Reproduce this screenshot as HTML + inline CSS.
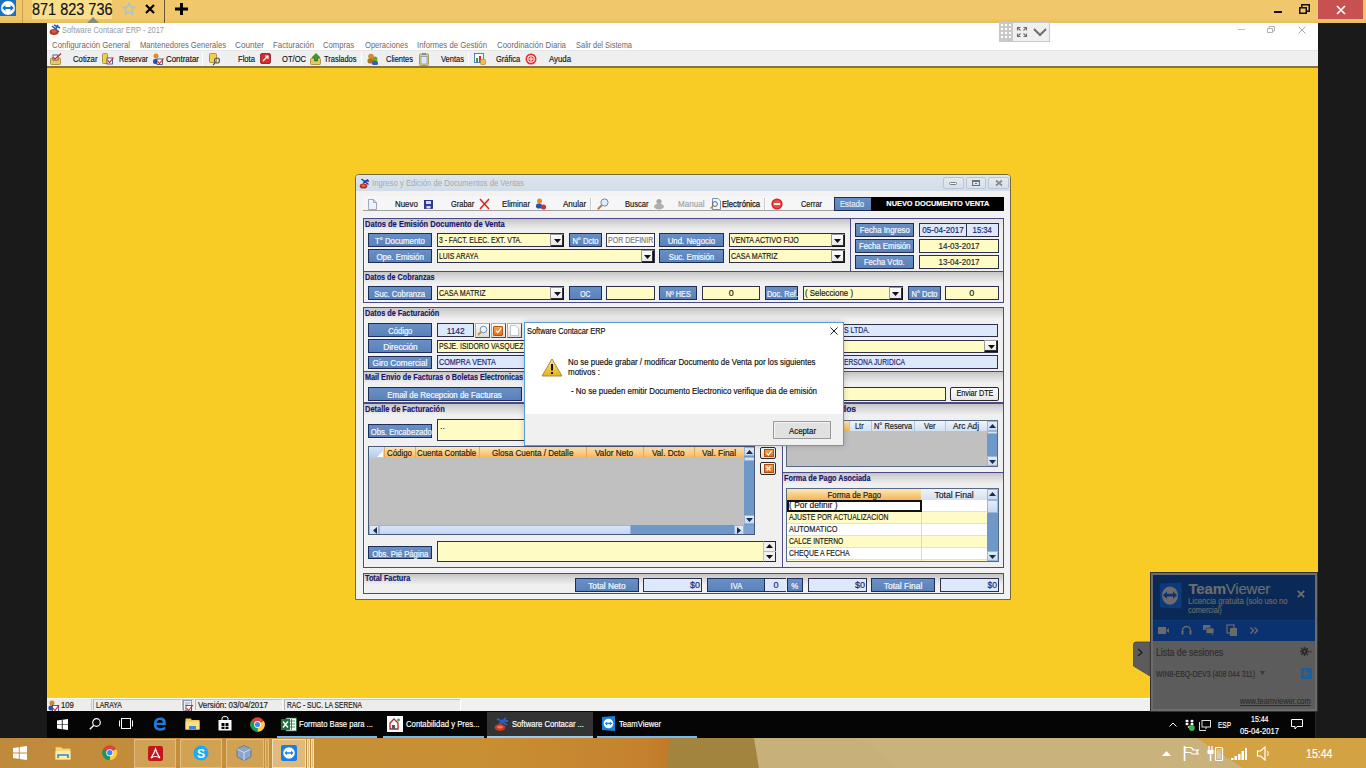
<!DOCTYPE html>
<html><head><meta charset="utf-8">
<style>
*{margin:0;padding:0;box-sizing:border-box}
html,body{width:1366px;height:768px;overflow:hidden;background:#1a1a1a;font-family:"Liberation Sans",sans-serif;}
.a{position:absolute}
.t{position:absolute;white-space:nowrap;line-height:1}
svg{position:absolute;overflow:visible}
.mn{position:absolute;white-space:nowrap;line-height:1;font-size:8.6px;color:#6a6a6a;top:41px}
.tbt{position:absolute;white-space:nowrap;line-height:1;font-size:8.6px;color:#111;top:55px;-webkit-text-stroke:0.15px #111}
.sep{position:absolute;width:1px;background:#c4c4c4;border-right:1px solid #fff}
/* child */
.bb{position:absolute;background:linear-gradient(#6a8fc4,#5a80b6);border:1px solid #1f3260;color:#e8eef8;font-size:8.2px;text-align:center;white-space:nowrap;overflow:hidden}
.yi{position:absolute;background:#fffbc2;border:1px solid #34344a;font-size:8.2px;color:#111;white-space:nowrap;overflow:hidden}
.li{position:absolute;background:#dde8fb;border:1px solid #34344a;font-size:8.2px;color:#1d2a80;white-space:nowrap;overflow:hidden}
.dd{position:absolute;width:14px;background:linear-gradient(#fdfdfd,#e4e4e4);border:1px solid #222;border-top-color:#888;border-left-color:#888}
.dd:after{content:"";position:absolute;left:3px;top:5px;border-left:3.5px solid transparent;border-right:3.5px solid transparent;border-top:4px solid #111}
.gb{position:absolute;border:1px solid #4e4d85;background:#f0f0f0}
.gh{position:absolute;left:0;top:0;right:0;height:10px;background:linear-gradient(#c8c8c8,#f0f0f0)}
.ght{position:absolute;white-space:nowrap;line-height:1;font-size:8.6px;font-weight:bold;color:#23237a}
.ct{position:absolute;white-space:nowrap;line-height:1;font-size:8.4px;color:#111}
.is{display:inline-block}
.t,.is{-webkit-text-stroke:0.18px currentColor}
</style></head>
<body>
<!-- ============ TV TOP BAR ============ -->
<div class="a" style="left:0;top:0;width:1366px;height:23px;background:linear-gradient(#f0c86b 0,#f0c86b 80%,#e6bd60 100%)"></div>
<div class="a" style="left:0;top:0;width:16px;height:16px;background:#1d6fc4"></div>
<div class="a" style="left:1px;top:1px;width:14px;height:14px;border-radius:50%;background:#fff"></div>
<svg style="left:2px;top:4px" width="12" height="8" viewBox="0 0 12 8"><path d="M0 4 L3.5 1 V3 H8.5 V1 L12 4 L8.5 7 V5 H3.5 V7 Z" fill="#1d6fc4"></path></svg>
<div class="a" style="left:22px;top:0;width:1px;height:23px;background:#c9a04e"></div>
<div class="a" style="left:32px;top:0;width:80px;height:19px;background:#f9df8c"></div>
<div class="t" style="left: 32px; top: 0.8px; font-size: 17px; color: rgb(17, 17, 17); transform-origin: left center; transform: scaleX(0.8514);">871 823 736</div>
<svg style="left:87px;top:16px" width="12" height="7"><path d="M0 7 L6 1 L12 7Z" fill="#8a8a80"></path></svg>
<svg style="left:121px;top:1px" width="16" height="15" viewBox="0 0 16 15"><path d="M8 0.5 L10.2 5.3 L15.5 5.8 L11.5 9.3 L12.7 14.5 L8 11.8 L3.3 14.5 L4.5 9.3 L0.5 5.8 L5.8 5.3 Z" fill="#aac4cf"></path><path d="M8 4 L9.1 6.6 L12 6.9 L9.8 8.8 L10.5 11.6 L8 10.1 L5.5 11.6 L6.2 8.8 L4 6.9 L6.9 6.6Z" fill="#f0c86b"></path></svg>
<svg style="left:145px;top:4px" width="10" height="10"><path d="M1 1 L9 9 M9 1 L1 9" stroke="#000" stroke-width="2.2"></path></svg>
<div class="a" style="left:164px;top:0;width:1px;height:23px;background:#6a5a30"></div>
<svg style="left:175px;top:3px" width="13" height="12"><path d="M6.5 0 V12 M0 6 H13" stroke="#000" stroke-width="3"></path></svg>
<div class="a" style="left:1274px;top:11px;width:8px;height:2px;background:#111"></div>
<svg style="left:1299px;top:4px" width="11" height="10"><path d="M0.75 3.75 H7.25 V9.25 H0.75 Z M2.75 3.5 V0.75 H10.25 V7.25 H7.5" fill="none" stroke="#111" stroke-width="1.5"></path></svg>
<div class="a" style="left:1318px;top:0;width:45px;height:19px;background:#c75050"></div>
<svg style="left:1336px;top:5px" width="10" height="10"><path d="M1 1 L9 9 M9 1 L1 9" stroke="#fff" stroke-width="1.6"></path></svg>

<!-- ============ APP WINDOW ============ -->
<div class="a" style="left:47px;top:23px;width:1271px;height:28px;background:#fff"></div>
<div class="a" style="left:47px;top:50px;width:1271px;height:17px;background:#efefef;border-top:1px solid #e6e6e6"></div>
<div class="a" style="left:47px;top:66.4px;width:1271px;height:2px;background:#857443"></div>
<!-- app icon -->
<svg style="left:49px;top:24px" width="12" height="12" viewBox="0 0 12 12"><path d="M5 1 L11 4 M9 1 L6 6 M3 2 L10 8" stroke="#2a5bb8" stroke-width="1.6"></path><ellipse cx="5" cy="8" rx="4.5" ry="3" fill="#b0402a"></ellipse><ellipse cx="5" cy="7.5" rx="2.5" ry="1.3" fill="#e06040"></ellipse></svg>
<div class="t" style="left: 62px; top: 26px; font-size: 8.8px; color: rgb(154, 154, 154); -webkit-text-stroke: 0px; transform-origin: left center; transform: scaleX(0.8456);">Software Contacar ERP - 2017</div>
<div class="mn" style="left: 52px; transform-origin: left center; transform: scaleX(0.907);">Configuración General</div>
<div class="mn" style="left: 140px; transform-origin: left center; transform: scaleX(0.8867);">Mantenedores Generales</div>
<div class="mn" style="left: 235px; transform-origin: left center; transform: scaleX(0.9484);">Counter</div>
<div class="mn" style="left: 273px; transform-origin: left center; transform: scaleX(0.913);">Facturación</div>
<div class="mn" style="left: 323px; transform-origin: left center; transform: scaleX(0.8889);">Compras</div>
<div class="mn" style="left: 364.5px; transform-origin: left center; transform: scaleX(0.8823);">Operaciones</div>
<div class="mn" style="left: 417px; transform-origin: left center; transform: scaleX(0.9045);">Informes de Gestión</div>
<div class="mn" style="left: 497px; transform-origin: left center; transform: scaleX(0.9141);">Coordinación Diaria</div>
<div class="mn" style="left: 575.5px; transform-origin: left center; transform: scaleX(0.8684);">Salir del Sistema</div>
<!-- TV widget -->
<div class="a" style="left:999px;top:22px;width:51px;height:20px;background:#f0f0f0;border:1px solid #c8c8c8"></div>
<div class="a" style="left:999px;top:22px;width:14px;height:20px;background:#c9c9c9"></div>
<svg style="left:1001px;top:24px" width="10" height="16"><g fill="#fff"><rect x="0" y="0" width="2" height="2"></rect><rect x="4" y="0" width="2" height="2"></rect><rect x="8" y="0" width="2" height="2"></rect><rect x="0" y="4" width="2" height="2"></rect><rect x="4" y="4" width="2" height="2"></rect><rect x="8" y="4" width="2" height="2"></rect><rect x="0" y="8" width="2" height="2"></rect><rect x="4" y="8" width="2" height="2"></rect><rect x="8" y="8" width="2" height="2"></rect><rect x="0" y="12" width="2" height="2"></rect><rect x="4" y="12" width="2" height="2"></rect><rect x="8" y="12" width="2" height="2"></rect></g></svg>
<svg style="left:1017px;top:27px" width="10" height="10"><path d="M0.5 3.5 V0.5 H3.5 M0.5 0.5 L3.5 3.5 M6.5 0.5 H9.5 V3.5 M9.5 0.5 L6.5 3.5 M0.5 6.5 V9.5 H3.5 M0.5 9.5 L3.5 6.5 M9.5 6.5 V9.5 H6.5 M9.5 9.5 L6.5 6.5" stroke="#6e6e6e" stroke-width="1.1" fill="none"></path></svg>
<svg style="left:1033px;top:28px" width="14" height="8"><path d="M1 1 L7 7 L13 1" stroke="#6e6e6e" stroke-width="2" fill="none"></path></svg>
<div class="a" style="left:1238px;top:29px;width:7px;height:1px;background:#c0c0c0"></div>
<svg style="left:1267px;top:26px" width="8" height="7"><path d="M0.5 2.5 H5.5 V6.5 H0.5 Z M2 2.5 V0.5 H7.5 V5 H5.5" fill="none" stroke="#b0b0b0" stroke-width="1"></path></svg>
<svg style="left:1298px;top:26px" width="8" height="8"><path d="M0.5 0.5 L7.5 7.5 M7.5 0.5 L0.5 7.5" stroke="#a8a8a8" stroke-width="1"></path></svg>

<!-- toolbar -->
<svg style="left:50px;top:53px" width="12" height="12" viewBox="0 0 12 12"><rect x="0.5" y="5" width="10" height="6.5" rx="1" fill="#e8c860" stroke="#a08030" stroke-width="0.8"></rect><rect x="3" y="2" width="5" height="5" fill="#fff" stroke="#2a3a80" stroke-width="0.8"></rect><path d="M3.5 4 L5 6 L11 0.5" stroke="#d02020" stroke-width="1.2" fill="none"></path></svg>
<div class="tbt" style="left: 72.5px; transform-origin: left center; transform: scaleX(0.8996);">Cotizar</div>
<svg style="left:102px;top:53px" width="12" height="12" viewBox="0 0 12 12"><rect x="0.5" y="0.5" width="5" height="10" rx="1" fill="#f0d050" stroke="#a08030" stroke-width="0.8"></rect><rect x="5" y="5" width="5.5" height="6" fill="#fff" stroke="#2a3a80" stroke-width="0.8"></rect><path d="M5.5 7 L7.5 9.5 L11.5 4.5" stroke="#d02020" stroke-width="1.1" fill="none"></path></svg>
<div class="tbt" style="left: 118.6px; transform-origin: left center; transform: scaleX(0.8315);">Reservar</div>
<svg style="left:152px;top:53px" width="12" height="12" viewBox="0 0 12 12"><circle cx="4" cy="3" r="2.5" fill="#e08a2a"></circle><rect x="1" y="6" width="5" height="5" rx="2" fill="#2a50b0"></rect><rect x="5" y="6" width="5.5" height="5.5" fill="#fff" stroke="#2a3a80" stroke-width="0.8"></rect><path d="M5.5 8 L7.5 10.5 L11.5 5.5" stroke="#d02020" stroke-width="1.1" fill="none"></path></svg>
<div class="tbt" style="left: 165.6px; transform-origin: left center; transform: scaleX(0.9211);">Contratar</div>
<div class="sep" style="left:202px;top:53px;height:13px"></div>
<svg style="left:209px;top:53px" width="12" height="12" viewBox="0 0 12 12"><rect x="0.5" y="0.5" width="7" height="9" rx="1" fill="#f0d050" stroke="#a08030" stroke-width="0.8"></rect><circle cx="8" cy="7.5" r="2.5" fill="none" stroke="#555" stroke-width="1.2"></circle><path d="M6 10 L4 12" stroke="#555" stroke-width="1.2"></path></svg>
<div class="tbt" style="left: 237.7px; transform-origin: left center; transform: scaleX(0.8896);">Flota</div>
<svg style="left:260px;top:53px" width="11" height="11" viewBox="0 0 11 11"><rect x="0.5" y="0.5" width="10" height="10" rx="1.5" fill="#d03030" stroke="#801818" stroke-width="0.8"></rect><path d="M3 8 L8 3 M5 3 H8 V6" stroke="#fff" stroke-width="1.2" fill="none"></path></svg>
<div class="tbt" style="left: 281.6px; transform-origin: left center; transform: scaleX(0.8817);">OT/OC</div>
<svg style="left:310px;top:53px" width="12" height="12" viewBox="0 0 12 12"><rect x="0.5" y="5.5" width="10" height="6" rx="1" fill="#e8c860" stroke="#a08030" stroke-width="0.8"></rect><path d="M6 0.5 L10 4.5 H7.5 V8 H4.5 V4.5 H2 Z" fill="#30a030" stroke="#106010" stroke-width="0.6"></path></svg>
<div class="tbt" style="left: 324.4px; transform-origin: left center; transform: scaleX(0.8685);">Traslados</div>
<div class="sep" style="left:361px;top:53px;height:13px"></div>
<svg style="left:367px;top:53px" width="12" height="12" viewBox="0 0 12 12"><circle cx="4" cy="3.5" r="2.8" fill="#d88a20"></circle><rect x="0.5" y="5.5" width="6" height="5" rx="2" fill="#b07020"></rect><circle cx="8" cy="6" r="2.5" fill="#70a030"></circle><rect x="5" y="8" width="6" height="4" rx="1.5" fill="#3060c0"></rect></svg>
<div class="tbt" style="left: 385.6px; transform-origin: left center; transform: scaleX(0.8692);">Clientes</div>
<svg style="left:419px;top:53px" width="10" height="13" viewBox="0 0 10 13"><rect x="0.5" y="1" width="9" height="11.5" rx="1" fill="#e8d070" stroke="#a08840" stroke-width="0.8"></rect><rect x="2" y="3.5" width="6" height="7.5" fill="#dfe8f8" stroke="#6080c0" stroke-width="0.6"></rect><rect x="3" y="0" width="4" height="2" fill="#8090a0"></rect></svg>
<div class="tbt" style="left: 441.2px; transform-origin: left center; transform: scaleX(0.8751);">Ventas</div>
<div class="sep" style="left:468px;top:53px;height:13px"></div>
<svg style="left:474px;top:53px" width="12" height="12" viewBox="0 0 12 12"><rect x="0.5" y="0.5" width="9" height="9" fill="#fff" stroke="#3060b0" stroke-width="0.8"></rect><rect x="2" y="5" width="2" height="4" fill="#30a030"></rect><rect x="5" y="3" width="2" height="6" fill="#d03030"></rect><rect x="6.5" y="6.5" width="5" height="5" rx="1" fill="#f0c040" stroke="#a08030" stroke-width="0.6"></rect></svg>
<div class="tbt" style="left: 495.7px; transform-origin: left center; transform: scaleX(0.8772);">Gráfica</div>
<svg style="left:525px;top:53px" width="12" height="12" viewBox="0 0 12 12"><circle cx="6" cy="6" r="5.5" fill="#e03030"></circle><circle cx="6" cy="6" r="3.8" fill="#fff"></circle><circle cx="6" cy="6" r="2.8" fill="#e03030"></circle><path d="M6 3.5 V8.5 M3.5 6 H8.5" stroke="#fff" stroke-width="1"></path></svg>
<div class="tbt" style="left: 549px; transform-origin: left center; transform: scaleX(0.9084);">Ayuda</div>

<!-- ============ MDI ============ -->
<div class="a" style="left:47px;top:68.2px;width:1271px;height:629.8px;background:#f9cb25"></div>

<!-- ============ CHILD WINDOW ============ -->
<div class="a" style="left:355px;top:174px;width:656px;height:426px;background:#f0f0f0;border:1px solid #76683a;border-radius:4px 4px 0 0;"></div>
<div class="a" style="left:356px;top:175px;width:654px;height:16px;background:linear-gradient(#dde6ef,#d3dde8);border-radius:3px 3px 0 0;"></div>
<div class="a" style="left:356px;top:191px;width:654px;height:408px;background:#f2f2f2;"></div>
<svg style="left:359px;top:178px" width="11" height="11" viewBox="0 0 11 11"><path d="M2.5 1 L9.5 6.5 M9 1.5 L4 5.5 M5 3 L10 3" stroke="#1c3a9a" stroke-width="1.5"></path><ellipse cx="4.5" cy="8" rx="3.8" ry="2.6" fill="#b83020"></ellipse><ellipse cx="4.5" cy="7.8" rx="2" ry="1.2" fill="#f06040"></ellipse></svg>
<div class="t" style="left: 372.4px; top: 179.02px; font-size: 8.6px; color: rgb(168, 168, 168); -webkit-text-stroke: 0px; transform-origin: left center; transform: scaleX(0.8987);">Ingreso y Edición de Documentos de Ventas</div>
<div class="a" style="left:943px;top:177.3px;width:20.5px;height:11.5px;background:linear-gradient(#e3eaf2,#d6e0ea);border:1px solid #bcc6d2;border-radius:2px;"></div>
<div class="a" style="left:965.8px;top:177.3px;width:19.9px;height:11.5px;background:linear-gradient(#e3eaf2,#d6e0ea);border:1px solid #bcc6d2;border-radius:2px;"></div>
<div class="a" style="left:988px;top:177.3px;width:20.7px;height:11.5px;background:linear-gradient(#e3eaf2,#d6e0ea);border:1px solid #bcc6d2;border-radius:2px;"></div>
<div class="a" style="left:949px;top:181.5px;width:8px;height:3px;border:1px solid #7a7a7a;border-radius:1.5px;background:#fafafa;"></div>
<div class="a" style="left:972px;top:180px;width:7.5px;height:6px;border:1px solid #707070;border-top-width:2px;"></div>
<div class="a" style="left:974.5px;top:182.5px;width:2px;height:1.5px;background:#707070;"></div>
<svg style="left:994.5px;top:180px" width="8" height="6"><path d="M1 0.5 L7 5.5 M7 0.5 L1 5.5" stroke="#8a8a8a" stroke-width="1.7"></path></svg>
<div class="a" style="left:363px;top:196px;width:471px;height:15px;background:#f6f6f6;border-bottom:1px solid #a0a0a0;"></div>
<svg style="left:368px;top:199px" width="9" height="11" viewBox="0 0 9 11"><path d="M0.5 0.5 H5.5 L8.5 3.5 V10.5 H0.5 Z" fill="#eef3fb" stroke="#8a96a8" stroke-width="0.8"></path><path d="M5.5 0.5 V3.5 H8.5" fill="none" stroke="#8a96a8" stroke-width="0.8"></path></svg>
<div class="t" style="left: 394.7px; top: 201.26px; font-size: 8.2px; color: rgb(21, 21, 21); transform-origin: left center; transform: scaleX(0.9632);">Nuevo</div>
<svg style="left:424px;top:200px" width="9" height="9" viewBox="0 0 9 9"><rect x="0.5" y="0.5" width="8" height="8" fill="#2d3fb0" stroke="#1a2470" stroke-width="0.8"></rect><rect x="2" y="1" width="5" height="3" fill="#d8d8e8"></rect><rect x="2.5" y="6" width="4" height="2.5" fill="#e0e0f0"></rect></svg>
<div class="t" style="left: 451px; top: 201.26px; font-size: 8.2px; color: rgb(21, 21, 21); transform-origin: left center; transform: scaleX(0.9104);">Grabar</div>
<svg style="left:479px;top:198px" width="11" height="12"><path d="M1 1 L10 11 M10 1 L1 11" stroke="#e02020" stroke-width="1.5"></path></svg>
<div class="t" style="left: 501.8px; top: 201.26px; font-size: 8.2px; color: rgb(21, 21, 21); transform-origin: left center; transform: scaleX(0.9466);">Eliminar</div>
<svg style="left:535px;top:198px" width="12" height="12" viewBox="0 0 12 12"><circle cx="4.5" cy="3" r="2.5" fill="#e08a2a"></circle><rect x="1" y="5.5" width="6" height="5" rx="2" fill="#2a50b0"></rect><circle cx="8.5" cy="9" r="2.6" fill="#d03030"></circle></svg>
<div class="t" style="left: 563.3px; top: 201.26px; font-size: 8.2px; color: rgb(21, 21, 21); transform-origin: left center; transform: scaleX(0.9801);">Anular</div>
<div class="a" style="left:590px;top:198px;width:2px;height:12px;background:#c8c8c8;border-right:1px solid #fff;"></div>
<svg style="left:597px;top:198px" width="12" height="12" viewBox="0 0 12 12"><circle cx="7.5" cy="4.5" r="3.6" fill="#dfeefa" stroke="#6a8ab0" stroke-width="1"></circle><path d="M4.8 7.2 L0.8 11.2" stroke="#c08030" stroke-width="2"></path></svg>
<div class="t" style="left: 624.5px; top: 201.26px; font-size: 8.2px; color: rgb(21, 21, 21); transform-origin: left center; transform: scaleX(0.9221);">Buscar</div>
<svg style="left:653px;top:198px" width="12" height="12" viewBox="0 0 12 12"><circle cx="6" cy="3.5" r="2.6" fill="#a8a8a8"></circle><ellipse cx="6" cy="8.5" rx="5" ry="3" fill="#b0b0b0"></ellipse></svg>
<div class="t" style="left: 677.5px; top: 201.26px; font-size: 8.2px; color: rgb(164, 164, 164); transform-origin: left center; transform: scaleX(0.9866);">Manual</div>
<svg style="left:710px;top:198px" width="11" height="12" viewBox="0 0 11 12"><path d="M2.5 0.5 H8 L10.5 3 V11.5 H2.5 Z" fill="#f4f8fc" stroke="#5a7aa0" stroke-width="0.8"></path><circle cx="5" cy="6" r="2.4" fill="none" stroke="#4a6a98" stroke-width="1"></circle><path d="M3.2 7.8 L0.5 10.5" stroke="#c08030" stroke-width="1.4"></path></svg>
<div class="t" style="left: 722.3px; top: 201.26px; font-size: 8.2px; color: rgb(21, 21, 21); -webkit-text-stroke: 0.25px rgb(21, 21, 21); transform-origin: left center; transform: scaleX(0.9379);">Electrónica</div>
<div class="a" style="left:764px;top:198px;width:2px;height:12px;background:#c8c8c8;border-right:1px solid #fff;"></div>
<svg style="left:771px;top:198px" width="12" height="12" viewBox="0 0 12 12"><circle cx="6" cy="6" r="5.6" fill="#d82020"></circle><circle cx="6" cy="6" r="4.2" fill="#f04848"></circle><rect x="2.8" y="5" width="6.4" height="2" fill="#fff"></rect></svg>
<div class="t" style="left: 801px; top: 201.26px; font-size: 8.2px; color: rgb(21, 21, 21); transform-origin: left center; transform: scaleX(0.9051);">Cerrar</div>
<div class="a" style="left:834px;top:196.5px;width:37px;height:14.1px;background:linear-gradient(#6890c6,#5a82b9);border:1px solid #1d2d58;border-right:none;"></div>
<div class="a" style="left:834px;top:199.69px;width:37px;text-align:center;line-height:1;white-space:nowrap;font-size:8.4px;color:#e6edf7;"><span class="is" style="transform-origin: center center; transform: scaleX(0.928);">Estado</span></div>
<div class="a" style="left:871px;top:196.5px;width:133px;height:14.1px;background:#000;"></div>
<div class="a" style="left:871px;top:200.03px;width:133px;text-align:center;line-height:1;white-space:nowrap;font-size:8px;color:#fff;font-weight:bold;"><span class="is" style="transform-origin: center center; transform: scaleX(0.922);">NUEVO DOCUMENTO VENTA</span></div>
<div class="a" style="left:363px;top:218px;width:641px;height:53.5px;background:#f0f0f0;border:1px solid #4b4a86;box-shadow:inset 1px 1px 0 #fafafa;"></div>
<div class="a" style="left:364px;top:219px;width:639px;height:11px;background:linear-gradient(#c4c4c4,#d6d6d6 35%,#f0f0f0);"></div>
<div class="t" style="left: 365.3px; top: 219.7px; font-size: 8.5px; color: rgb(22, 22, 110); font-weight: bold; transform-origin: left center; transform: scaleX(0.8861);">Datos de Emisión Documento de Venta</div>
<div class="a" style="left:850px;top:218px;width:1px;height:53px;background:#4b4a86;"></div>
<div class="a" style="left:851px;top:219px;width:152px;height:11px;background:linear-gradient(#e2e2e2,#f0f0f0);"></div>
<div class="a" style="left:368px;top:233.2px;width:64px;height:14.1px;background:linear-gradient(#6890c6,#5a82b9);border:1px solid #1d2d58;"></div>
<div class="a" style="left:368px;top:237.09px;width:64px;text-align:center;line-height:1;white-space:nowrap;font-size:8.4px;color:#e9f0f9;text-shadow:0 0 0.6px rgba(255,255,255,0.5)"><span class="is" style="transform-origin: center center; transform: scaleX(0.9287);">T° Documento</span></div>
<div class="a" style="left:437.2px;top:233.2px;width:127.2px;height:14.1px;background:#fffbc4;border:1px solid #2e2e48;"></div>
<div class="t" style="left: 439.2px; top: 236.37px; font-size: 9px; color: rgb(26, 26, 26); transform-origin: left center; transform: scaleX(0.7589);">3 - FACT. ELEC. EXT. VTA.</div>
<div class="a" style="left:550.4px;top:233.7px;width:13.5px;height:13.1px;background:linear-gradient(#fefefe,#e6e6e6);border:1px solid #111;border-top-color:#9a9a9a;border-left-color:#9a9a9a;box-shadow:inset -1px -1px 0 #333;"></div>
<svg style="left:553.65px;top:238.75px" width="7" height="4"><path d="M0 0 H7 L3.5 4Z" fill="#111"></path></svg>
<div class="a" style="left:569.3px;top:233.2px;width:32.4px;height:14.1px;background:linear-gradient(#6890c6,#5a82b9);border:1px solid #1d2d58;"></div>
<div class="a" style="left:569.3px;top:237.09px;width:32.4px;text-align:center;line-height:1;white-space:nowrap;font-size:8.4px;color:#e9f0f9;text-shadow:0 0 0.6px rgba(255,255,255,0.5)"><span class="is" style="transform-origin: center center; transform: scaleX(0.9049);">N° Dcto</span></div>
<div class="a" style="left:606.3px;top:233.2px;width:48.5px;height:14.1px;background:#fdfdfd;border:1px solid #2e2e48;"></div>
<div class="t" style="left: 607.9px; top: 236.37px; font-size: 9px; color: rgb(122, 122, 122); transform-origin: left center; transform: scaleX(0.7791);">POR DEFINIR</div>
<div class="a" style="left:659px;top:233.2px;width:64.6px;height:14.1px;background:linear-gradient(#6890c6,#5a82b9);border:1px solid #1d2d58;"></div>
<div class="a" style="left:659px;top:237.09px;width:64.6px;text-align:center;line-height:1;white-space:nowrap;font-size:8.4px;color:#e9f0f9;text-shadow:0 0 0.6px rgba(255,255,255,0.5)"><span class="is" style="transform-origin: center center; transform: scaleX(0.932);">Und. Negocio</span></div>
<div class="a" style="left:728.5px;top:233.2px;width:116.5px;height:14.1px;background:#fffbc4;border:1px solid #2e2e48;"></div>
<div class="t" style="left: 730.5px; top: 236.37px; font-size: 9px; color: rgb(26, 26, 26); transform-origin: left center; transform: scaleX(0.7839);">VENTA ACTIVO FIJO</div>
<div class="a" style="left:831px;top:233.7px;width:13.5px;height:13.1px;background:linear-gradient(#fefefe,#e6e6e6);border:1px solid #111;border-top-color:#9a9a9a;border-left-color:#9a9a9a;box-shadow:inset -1px -1px 0 #333;"></div>
<svg style="left:834.25px;top:238.75px" width="7" height="4"><path d="M0 0 H7 L3.5 4Z" fill="#111"></path></svg>
<div class="a" style="left:368px;top:249.3px;width:64px;height:13.8px;background:linear-gradient(#6890c6,#5a82b9);border:1px solid #1d2d58;"></div>
<div class="a" style="left:368px;top:252.95px;width:64px;text-align:center;line-height:1;white-space:nowrap;font-size:8.4px;color:#e9f0f9;text-shadow:0 0 0.6px rgba(255,255,255,0.5)"><span class="is" style="transform-origin: center center; transform: scaleX(0.9447);">Ope. Emisión</span></div>
<div class="a" style="left:437.2px;top:249.3px;width:217.6px;height:13.8px;background:#fffbc4;border:1px solid #2e2e48;"></div>
<div class="t" style="left: 439.2px; top: 252.24px; font-size: 9px; color: rgb(26, 26, 26); transform-origin: left center; transform: scaleX(0.7678);">LUIS ARAYA</div>
<div class="a" style="left:640.8px;top:249.8px;width:13.5px;height:12.8px;background:linear-gradient(#fefefe,#e6e6e6);border:1px solid #111;border-top-color:#9a9a9a;border-left-color:#9a9a9a;box-shadow:inset -1px -1px 0 #333;"></div>
<svg style="left:644.05px;top:254.7px" width="7" height="4"><path d="M0 0 H7 L3.5 4Z" fill="#111"></path></svg>
<div class="a" style="left:659px;top:249.3px;width:64.6px;height:13.8px;background:linear-gradient(#6890c6,#5a82b9);border:1px solid #1d2d58;"></div>
<div class="a" style="left:659px;top:252.95px;width:64.6px;text-align:center;line-height:1;white-space:nowrap;font-size:8.4px;color:#e9f0f9;text-shadow:0 0 0.6px rgba(255,255,255,0.5)"><span class="is" style="transform-origin: center center; transform: scaleX(0.9269);">Suc. Emisión</span></div>
<div class="a" style="left:728.5px;top:249.3px;width:116.5px;height:13.8px;background:#fffbc4;border:1px solid #2e2e48;"></div>
<div class="t" style="left: 730.5px; top: 252.24px; font-size: 9px; color: rgb(26, 26, 26); transform-origin: left center; transform: scaleX(0.7853);">CASA MATRIZ</div>
<div class="a" style="left:831px;top:249.8px;width:13.5px;height:12.8px;background:linear-gradient(#fefefe,#e6e6e6);border:1px solid #111;border-top-color:#9a9a9a;border-left-color:#9a9a9a;box-shadow:inset -1px -1px 0 #333;"></div>
<svg style="left:834.25px;top:254.7px" width="7" height="4"><path d="M0 0 H7 L3.5 4Z" fill="#111"></path></svg>
<div class="a" style="left:855.1px;top:223.2px;width:58.7px;height:13.6px;background:linear-gradient(#6890c6,#5a82b9);border:1px solid #1d2d58;"></div>
<div class="a" style="left:855.1px;top:226.49px;width:58.7px;text-align:center;line-height:1;white-space:nowrap;font-size:8.4px;color:#e9f0f9;text-shadow:0 0 0.6px rgba(255,255,255,0.5)"><span class="is" style="transform-origin: center center; transform: scaleX(0.9338);">Fecha Ingreso</span></div>
<div class="a" style="left:919px;top:223.2px;width:47.8px;height:13.6px;background:#dde8fb;border:1px solid #2e2e48;"></div>
<div class="a" style="left:919px;top:225.88px;width:47.8px;text-align:center;line-height:1;white-space:nowrap;font-size:9px;color:#1b2572;"><span class="is" style="transform-origin: center center; transform: scaleX(0.9013);">05-04-2017</span></div>
<div class="a" style="left:966.3px;top:223.2px;width:32.3px;height:13.6px;background:#dde8fb;border:1px solid #2e2e48;"></div>
<div class="a" style="left:966.3px;top:225.88px;width:32.3px;text-align:center;line-height:1;white-space:nowrap;font-size:9px;color:#1b2572;"><span class="is" style="transform-origin: center center; transform: scaleX(0.8566);">15:34</span></div>
<div class="a" style="left:855.1px;top:239.3px;width:58.7px;height:13.4px;background:linear-gradient(#6890c6,#5a82b9);border:1px solid #1d2d58;"></div>
<div class="a" style="left:855.1px;top:242.39px;width:58.7px;text-align:center;line-height:1;white-space:nowrap;font-size:8.4px;color:#e9f0f9;text-shadow:0 0 0.6px rgba(255,255,255,0.5)"><span class="is" style="transform-origin: center center; transform: scaleX(0.9298);">Fecha Emisión</span></div>
<div class="a" style="left:919px;top:239.3px;width:79.6px;height:13.4px;background:#fffbc4;border:1px solid #2e2e48;"></div>
<div class="a" style="left:919px;top:241.78px;width:79.6px;text-align:center;line-height:1;white-space:nowrap;font-size:9px;color:#2a2a2a;"><span class="is" style="transform-origin: center center; transform: scaleX(0.8926);">14-03-2017</span></div>
<div class="a" style="left:855.1px;top:255.2px;width:58.7px;height:13.4px;background:linear-gradient(#6890c6,#5a82b9);border:1px solid #1d2d58;"></div>
<div class="a" style="left:855.1px;top:258.29px;width:58.7px;text-align:center;line-height:1;white-space:nowrap;font-size:8.4px;color:#e9f0f9;text-shadow:0 0 0.6px rgba(255,255,255,0.5)"><span class="is" style="transform-origin: center center; transform: scaleX(0.9127);">Fecha Vcto.</span></div>
<div class="a" style="left:919px;top:255.2px;width:79.6px;height:13.4px;background:#fffbc4;border:1px solid #2e2e48;"></div>
<div class="a" style="left:919px;top:257.68px;width:79.6px;text-align:center;line-height:1;white-space:nowrap;font-size:9px;color:#2a2a2a;"><span class="is" style="transform-origin: center center; transform: scaleX(0.8926);">13-04-2017</span></div>
<div class="a" style="left:363px;top:271px;width:641px;height:31.8px;background:#f0f0f0;border:1px solid #4b4a86;box-shadow:inset 1px 1px 0 #fafafa;"></div>
<div class="a" style="left:364px;top:272px;width:639px;height:11px;background:linear-gradient(#c4c4c4,#d6d6d6 35%,#f0f0f0);"></div>
<div class="t" style="left: 365.3px; top: 272.9px; font-size: 8.5px; color: rgb(22, 22, 110); font-weight: bold; transform-origin: left center; transform: scaleX(0.8517);">Datos de Cobranzas</div>
<div class="a" style="left:368px;top:286px;width:64px;height:14px;background:linear-gradient(#6890c6,#5a82b9);border:1px solid #1d2d58;"></div>
<div class="a" style="left:368px;top:289.81px;width:64px;text-align:center;line-height:1;white-space:nowrap;font-size:8.4px;color:#e9f0f9;text-shadow:0 0 0.6px rgba(255,255,255,0.5)"><span class="is" style="transform-origin: center center; transform: scaleX(0.9169);">Suc. Cobranza</span></div>
<div class="a" style="left:437.2px;top:286px;width:127.2px;height:14px;background:#fffbc4;border:1px solid #2e2e48;"></div>
<div class="t" style="left: 439.2px; top: 289.09px; font-size: 9px; color: rgb(26, 26, 26); transform-origin: left center; transform: scaleX(0.7869);">CASA MATRIZ</div>
<div class="a" style="left:550.4px;top:286.5px;width:13.5px;height:13px;background:linear-gradient(#fefefe,#e6e6e6);border:1px solid #111;border-top-color:#9a9a9a;border-left-color:#9a9a9a;box-shadow:inset -1px -1px 0 #333;"></div>
<svg style="left:553.65px;top:291.5px" width="7" height="4"><path d="M0 0 H7 L3.5 4Z" fill="#111"></path></svg>
<div class="a" style="left:569.3px;top:286px;width:32.4px;height:14px;background:linear-gradient(#6890c6,#5a82b9);border:1px solid #1d2d58;"></div>
<div class="a" style="left:569.3px;top:289.81px;width:32.4px;text-align:center;line-height:1;white-space:nowrap;font-size:8.4px;color:#e9f0f9;text-shadow:0 0 0.6px rgba(255,255,255,0.5)"><span class="is" style="transform-origin: center center; transform: scaleX(0.796);">OC</span></div>
<div class="a" style="left:606.3px;top:286px;width:48.5px;height:14px;background:#fffbc4;border:1px solid #2e2e48;"></div>
<div class="a" style="left:659px;top:286px;width:37.7px;height:14px;background:linear-gradient(#6890c6,#5a82b9);border:1px solid #1d2d58;"></div>
<div class="a" style="left:659px;top:289.81px;width:37.7px;text-align:center;line-height:1;white-space:nowrap;font-size:8.4px;color:#e9f0f9;text-shadow:0 0 0.6px rgba(255,255,255,0.5)"><span class="is" style="transform-origin: center center; transform: scaleX(0.8724);">Nº HES</span></div>
<div class="a" style="left:702px;top:286px;width:58.4px;height:14px;background:#fffbc4;border:1px solid #2e2e48;"></div>
<div class="a" style="left:702px;top:289.09px;width:58.4px;text-align:center;line-height:1;white-space:nowrap;font-size:9px;color:#1a1a1a;"><span class="is">0</span></div>
<div class="a" style="left:765px;top:286px;width:32.5px;height:14px;background:linear-gradient(#6890c6,#5a82b9);border:1px solid #1d2d58;"></div>
<div class="a" style="left:765px;top:289.81px;width:32.5px;text-align:center;line-height:1;white-space:nowrap;font-size:8.4px;color:#e9f0f9;text-shadow:0 0 0.6px rgba(255,255,255,0.5)"><span class="is" style="transform-origin: center center; transform: scaleX(0.8877);">Doc. Ref.</span></div>
<div class="a" style="left:802.5px;top:286px;width:100.5px;height:14px;background:#fffbc4;border:1px solid #2e2e48;"></div>
<div class="t" style="left: 804.5px; top: 289.09px; font-size: 9px; color: rgb(26, 26, 26); transform-origin: left center; transform: scaleX(0.8722);">( Seleccione )</div>
<div class="a" style="left:889px;top:286.5px;width:13.5px;height:13px;background:linear-gradient(#fefefe,#e6e6e6);border:1px solid #111;border-top-color:#9a9a9a;border-left-color:#9a9a9a;box-shadow:inset -1px -1px 0 #333;"></div>
<svg style="left:892.25px;top:291.5px" width="7" height="4"><path d="M0 0 H7 L3.5 4Z" fill="#111"></path></svg>
<div class="a" style="left:908px;top:286px;width:32.6px;height:14px;background:linear-gradient(#6890c6,#5a82b9);border:1px solid #1d2d58;"></div>
<div class="a" style="left:908px;top:289.81px;width:32.6px;text-align:center;line-height:1;white-space:nowrap;font-size:8.4px;color:#e9f0f9;text-shadow:0 0 0.6px rgba(255,255,255,0.5)"><span class="is" style="transform-origin: center center; transform: scaleX(0.898);">N° Dcto</span></div>
<div class="a" style="left:945px;top:286px;width:53.6px;height:14px;background:#fffbc4;border:1px solid #2e2e48;"></div>
<div class="a" style="left:945px;top:289.09px;width:53.6px;text-align:center;line-height:1;white-space:nowrap;font-size:9px;color:#1a1a1a;"><span class="is">0</span></div>
<div class="a" style="left:363px;top:307px;width:641px;height:64.5px;background:#f0f0f0;border:1px solid #4b4a86;box-shadow:inset 1px 1px 0 #fafafa;"></div>
<div class="a" style="left:364px;top:308px;width:639px;height:11px;background:linear-gradient(#c4c4c4,#d6d6d6 35%,#f0f0f0);"></div>
<div class="t" style="left: 365.3px; top: 309.3px; font-size: 8.5px; color: rgb(22, 22, 110); font-weight: bold; transform-origin: left center; transform: scaleX(0.8584);">Datos de Facturación</div>
<div class="a" style="left:368px;top:323.4px;width:64px;height:14.1px;background:linear-gradient(#6890c6,#5a82b9);border:1px solid #1d2d58;"></div>
<div class="a" style="left:368px;top:327.29px;width:64px;text-align:center;line-height:1;white-space:nowrap;font-size:8.4px;color:#e9f0f9;text-shadow:0 0 0.6px rgba(255,255,255,0.5)"><span class="is" style="transform-origin: center center; transform: scaleX(0.9116);">Código</span></div>
<div class="a" style="left:437.3px;top:323.4px;width:37.2px;height:14.1px;background:#dde8fb;border:1px solid #2e2e48;"></div>
<div class="a" style="left:437.3px;top:326.57px;width:37.2px;text-align:center;line-height:1;white-space:nowrap;font-size:9px;color:#1b2572;"><span class="is" style="transform-origin: center center; transform: scaleX(0.9298);">1142</span></div>
<div class="a" style="left:474.5px;top:323px;width:15.2px;height:15px;background:linear-gradient(#fbfbfb,#dcdcdc);border:1px solid #4a4a4a;border-top-color:#b0b0b0;border-left-color:#b0b0b0;"></div>
<div class="a" style="left:491px;top:323px;width:14.5px;height:15px;background:linear-gradient(#fbfbfb,#dcdcdc);border:1px solid #4a4a4a;border-top-color:#b0b0b0;border-left-color:#b0b0b0;"></div>
<div class="a" style="left:506.6px;top:323px;width:15.4px;height:15px;background:linear-gradient(#fbfbfb,#dcdcdc);border:1px solid #4a4a4a;border-top-color:#b0b0b0;border-left-color:#b0b0b0;"></div>
<svg style="left:477px;top:325px" width="11" height="11"><circle cx="6.5" cy="4.5" r="3.3" fill="#e8f4fc" stroke="#7090b0" stroke-width="1"></circle><path d="M4 7 L1 10" stroke="#d08a30" stroke-width="1.8"></path></svg>
<div class="a" style="left:493.3px;top:325.5px;width:10px;height:10px;background:linear-gradient(#f8a040,#e0701a);border:1px solid #b85410;border-radius:1px;"></div>
<svg style="left:495.3px;top:327px" width="7" height="7"><path d="M0.8 3.5 L2.8 5.6 L6.2 1" stroke="#fff" stroke-width="1.3" fill="none"></path></svg>
<svg style="left:510px;top:325px" width="9" height="11"><path d="M0.5 0.5 H5.5 L8.5 3.5 V10.5 H0.5 Z" fill="#fff" stroke="#b8b8b8" stroke-width="0.8"></path></svg>
<div class="a" style="left:527px;top:323.7px;width:471.3px;height:13.3px;background:#dde8fb;border:1px solid #2e2e48;"></div>
<div class="t" style="left: 843.5px; top: 326.26px; font-size: 9px; color: rgb(27, 37, 114); transform-origin: left center; transform: scaleX(0.7708);">S LTDA.</div>
<div class="a" style="left:368px;top:339.4px;width:64px;height:13.6px;background:linear-gradient(#6890c6,#5a82b9);border:1px solid #1d2d58;"></div>
<div class="a" style="left:368px;top:342.9px;width:64px;text-align:center;line-height:1;white-space:nowrap;font-size:8.4px;color:#e9f0f9;text-shadow:0 0 0.6px rgba(255,255,255,0.5)"><span class="is" style="transform-origin: center center; transform: scaleX(0.9851);">Dirección</span></div>
<div class="a" style="left:437.2px;top:339.8px;width:561.1px;height:13.2px;background:#fffbc4;border:1px solid #2e2e48;"></div>
<div class="t" style="left: 439.2px; top: 342.28px; font-size: 9px; color: rgb(26, 26, 26); transform-origin: left center; transform: scaleX(0.7648);">PSJE. ISIDORO VASQUEZ</div>
<div class="a" style="left:984.3px;top:340.3px;width:13.5px;height:12.2px;background:linear-gradient(#fefefe,#e6e6e6);border:1px solid #111;border-top-color:#9a9a9a;border-left-color:#9a9a9a;box-shadow:inset -1px -1px 0 #333;"></div>
<svg style="left:987.55px;top:344.9px" width="7" height="4"><path d="M0 0 H7 L3.5 4Z" fill="#111"></path></svg>
<div class="a" style="left:368px;top:355.5px;width:64px;height:13.5px;background:linear-gradient(#6890c6,#5a82b9);border:1px solid #1d2d58;"></div>
<div class="a" style="left:368px;top:358.92px;width:64px;text-align:center;line-height:1;white-space:nowrap;font-size:8.4px;color:#e9f0f9;text-shadow:0 0 0.6px rgba(255,255,255,0.5)"><span class="is" style="transform-origin: center center; transform: scaleX(0.9792);">Giro Comercial</span></div>
<div class="a" style="left:437.2px;top:355.4px;width:561.1px;height:13.6px;background:#dde8fb;border:1px solid #2e2e48;"></div>
<div class="t" style="left: 439.4px; top: 358.19px; font-size: 9px; color: rgb(27, 37, 114); transform-origin: left center; transform: scaleX(0.8002);">COMPRA VENTA</div>
<div class="t" style="left: 843.5px; top: 357.68px; font-size: 9px; color: rgb(27, 37, 114); transform-origin: left center; transform: scaleX(0.7483);">ERSONA JURIDICA</div>
<div class="a" style="left:363px;top:371px;width:641px;height:32.2px;background:#f0f0f0;border:1px solid #4b4a86;box-shadow:inset 1px 1px 0 #fafafa;"></div>
<div class="a" style="left:364px;top:372px;width:639px;height:11px;background:linear-gradient(#c4c4c4,#d6d6d6 35%,#f0f0f0);"></div>
<div class="t" style="left: 365.3px; top: 373.1px; font-size: 8.5px; color: rgb(22, 22, 110); font-weight: bold; transform-origin: left center; transform: scaleX(0.851);">Mail Envio de Facturas o Boletas Electronicas</div>
<div class="a" style="left:368px;top:387px;width:154px;height:13.8px;background:linear-gradient(#6890c6,#5a82b9);border:1px solid #1d2d58;"></div>
<div class="a" style="left:368px;top:390.65px;width:154px;text-align:center;line-height:1;white-space:nowrap;font-size:8.4px;color:#e9f0f9;text-shadow:0 0 0.6px rgba(255,255,255,0.5)"><span class="is" style="transform-origin: center center; transform: scaleX(0.9459);">Email de Recepcion de Facturas</span></div>
<div class="a" style="left:527px;top:387px;width:418.6px;height:13.8px;background:#fffbc4;border:1px solid #2e2e48;"></div>
<div class="a" style="left:950.4px;top:387px;width:48.35px;height:13.8px;background:linear-gradient(#fdfdfd,#e8e8e8);border:1px solid #2a2a2a;border-radius:2px;"></div>
<div class="a" style="left:950.4px;top:390.36px;width:48.35px;text-align:center;line-height:1;white-space:nowrap;font-size:8.2px;color:#111;-webkit-text-stroke:0.3px #111;"><span class="is" style="transform-origin: center center; transform: scaleX(0.8815);">Enviar DTE</span></div>
<div class="a" style="left:363px;top:403px;width:419.5px;height:164.5px;background:#f0f0f0;border:1px solid #4b4a86;box-shadow:inset 1px 1px 0 #fafafa;"></div>
<div class="a" style="left:364px;top:404px;width:417.5px;height:11px;background:linear-gradient(#c4c4c4,#d6d6d6 35%,#f0f0f0);"></div>
<div class="t" style="left: 365.3px; top: 405.1px; font-size: 8.5px; color: rgb(22, 22, 110); font-weight: bold; transform-origin: left center; transform: scaleX(0.8787);">Detalle de Facturación</div>
<div class="a" style="left:368px;top:424px;width:64px;height:13.7px;background:linear-gradient(#6890c6,#5a82b9);border:1px solid #1d2d58;"></div>
<div class="a" style="left:368px;top:427.58px;width:64px;text-align:center;line-height:1;white-space:nowrap;font-size:8.4px;color:#e9f0f9;text-shadow:0 0 0.6px rgba(255,255,255,0.5)"><span class="is" style="transform-origin: center center; transform: scaleX(0.916);">Obs. Encabezado</span></div>
<div class="a" style="left:437px;top:419px;width:339px;height:21.5px;background:#fffbc4;border:1px solid #2e2e48;"></div>
<div class="t" style="left:440px;top:421.88px;font-size:9px;color:#1a1a1a;">..</div>
<div class="a" style="left:368px;top:445.6px;width:387px;height:89.7px;background:#c0c0c0;border:1px solid #566a86;"></div>
<div class="a" style="left:369px;top:446.6px;width:375px;height:11.7px;background:linear-gradient(#fde7b8,#f8cc80 55%,#f4b45c);"></div>
<div class="a" style="left:369px;top:446.6px;width:15px;height:11.7px;background:linear-gradient(#d7e5f7,#b3cbec);"></div>
<svg style="left:377px;top:451px" width="6" height="6"><path d="M6 0 V6 H0Z" fill="#fff"></path></svg>
<div class="a" style="left:384px;top:447px;width:1px;height:11px;background:#e9a955;"></div>
<div class="a" style="left:415px;top:447px;width:1px;height:11px;background:#e9a955;"></div>
<div class="a" style="left:478.6px;top:447px;width:1px;height:11px;background:#e9a955;"></div>
<div class="a" style="left:586.3px;top:447px;width:1px;height:11px;background:#e9a955;"></div>
<div class="a" style="left:642.5px;top:447px;width:1px;height:11px;background:#e9a955;"></div>
<div class="a" style="left:693.5px;top:447px;width:1px;height:11px;background:#e9a955;"></div>
<div class="t" style="left: 387.3px; top: 449.15px; font-size: 8.8px; color: rgb(26, 26, 26); transform-origin: left center; transform: scaleX(0.8928);">Código</div>
<div class="t" style="left: 417.2px; top: 449.15px; font-size: 8.8px; color: rgb(26, 26, 26); transform-origin: left center; transform: scaleX(0.8965);">Cuenta Contable</div>
<div class="t" style="left: 491.9px; top: 449.15px; font-size: 8.8px; color: rgb(26, 26, 26); transform-origin: left center; transform: scaleX(0.9196);">Glosa Cuenta / Detalle</div>
<div class="t" style="left: 595.2px; top: 449.15px; font-size: 8.8px; color: rgb(26, 26, 26); transform-origin: left center; transform: scaleX(0.9335);">Valor Neto</div>
<div class="t" style="left: 651.5px; top: 449.15px; font-size: 8.8px; color: rgb(26, 26, 26); transform-origin: left center; transform: scaleX(0.9273);">Val. Dcto</div>
<div class="t" style="left: 702.2px; top: 449.15px; font-size: 8.8px; color: rgb(26, 26, 26); transform-origin: left center; transform: scaleX(0.9464);">Val. Final</div>
<div class="a" style="left:744px;top:446.6px;width:10.7px;height:78.4px;background:#6e98c8;"></div>
<div class="a" style="left:744px;top:446.6px;width:10.7px;height:9.9px;background:linear-gradient(#e3edf9,#c8daf2);border:1px solid #9cb6da;"></div>
<svg style="left:746px;top:449.5px" width="7" height="4"><path d="M0 4 L3.5 0 L7 4Z" fill="#1a2a50"></path></svg>
<div class="a" style="left:744px;top:456.5px;width:10.7px;height:4px;background:linear-gradient(#e3edf9,#c8daf2);border:1px solid #9cb6da;"></div>
<div class="a" style="left:744px;top:514.8px;width:10.7px;height:9.7px;background:linear-gradient(#e3edf9,#c8daf2);border:1px solid #9cb6da;"></div>
<svg style="left:746px;top:518px" width="7" height="4"><path d="M0 0 L3.5 4 L7 0Z" fill="#1a2a50"></path></svg>
<div class="a" style="left:369px;top:525.2px;width:385.7px;height:10.1px;background:#6e98c8;"></div>
<div class="a" style="left:369.4px;top:525.2px;width:10px;height:10.1px;background:linear-gradient(#e3edf9,#c8daf2);border:1px solid #9cb6da;"></div>
<svg style="left:372.5px;top:527px" width="4" height="7"><path d="M4 0 L0 3.5 L4 7Z" fill="#1a2a50"></path></svg>
<div class="a" style="left:379.4px;top:525.2px;width:251.9px;height:10.1px;background:linear-gradient(#d6e5f8,#c3d7f1);border:1px solid #9cb6da;"></div>
<div class="a" style="left:733.6px;top:525.2px;width:10px;height:10.1px;background:linear-gradient(#e3edf9,#c8daf2);border:1px solid #9cb6da;"></div>
<svg style="left:737px;top:527px" width="4" height="7"><path d="M0 0 L4 3.5 L0 7Z" fill="#1a2a50"></path></svg>
<div class="a" style="left:743.6px;top:525.2px;width:11.1px;height:10.1px;background:#7ea3cf;"></div>
<div class="a" style="left:368px;top:445.6px;width:387px;height:89.7px;border:1px solid #4a5878;"></div>
<div class="a" style="left:760.4px;top:446.5px;width:16px;height:12.7px;background:linear-gradient(#fafafa,#dedede);border:1px solid #2a2a2a;border-radius:2px;"></div>
<div class="a" style="left:763.5px;top:448.5px;width:10px;height:8.7px;background:linear-gradient(#f9a444,#e2701c);border:1px solid #b05010;"></div>
<div class="a" style="left:760.4px;top:461.6px;width:16px;height:13.7px;background:linear-gradient(#fafafa,#dedede);border:1px solid #2a2a2a;border-radius:2px;"></div>
<div class="a" style="left:763.5px;top:463.6px;width:10px;height:9.7px;background:linear-gradient(#f9a444,#e2701c);border:1px solid #b05010;"></div>
<svg style="left:765.5px;top:450px" width="6" height="6"><path d="M0.6 3 L2.4 5 L5.6 0.8" stroke="#fff" stroke-width="1.2" fill="none"></path></svg>
<svg style="left:766px;top:466px" width="5" height="5"><path d="M0.5 0.5 L4.5 4.5 M4.5 0.5 L0.5 4.5" stroke="#fff" stroke-width="1.2"></path></svg>
<div class="a" style="left:368px;top:546.3px;width:64px;height:13.2px;background:linear-gradient(#6890c6,#5a82b9);border:1px solid #1d2d58;"></div>
<div class="a" style="left:368px;top:550.09px;width:64px;text-align:center;line-height:1;white-space:nowrap;font-size:8.4px;color:#e9f0f9;text-shadow:0 0 0.6px rgba(255,255,255,0.5)"><span class="is" style="transform-origin: center center; transform: scaleX(0.9251);">Obs. Pié Página</span></div>
<div class="a" style="left:437px;top:540.8px;width:339px;height:21.7px;background:#fffbc4;border:1px solid #2e2e48;"></div>
<div class="a" style="left:763.4px;top:540.8px;width:12.6px;height:21.7px;background:#f0f0f0;border:1px solid #2a2a2a;border-left-color:#c0c0c0;"></div>
<svg style="left:766.2px;top:544px" width="7" height="4"><path d="M0 4 L3.5 0 L7 4Z" fill="#111"></path></svg>
<svg style="left:766.2px;top:555px" width="7" height="4"><path d="M0 0 L3.5 4 L7 0Z" fill="#111"></path></svg>
<div class="a" style="left:763.4px;top:551px;width:12.6px;height:1px;background:#bbb;"></div>
<div class="a" style="left:781.5px;top:403px;width:222.5px;height:69.8px;background:#f0f0f0;border:1px solid #4b4a86;box-shadow:inset 1px 1px 0 #fafafa;"></div>
<div class="a" style="left:782.5px;top:404px;width:220.5px;height:11px;background:linear-gradient(#c4c4c4,#d6d6d6 35%,#f0f0f0);"></div>
<div class="t" style="left: 841px; top: 404.8px; font-size: 8.5px; color: rgb(22, 22, 110); font-weight: bold; transform-origin: left center; transform: scaleX(0.9917);">dos</div>
<div class="a" style="left:786.4px;top:419.6px;width:211.9px;height:47.3px;background:#c0c0c0;border:1px solid #566a86;"></div>
<div class="a" style="left:787.4px;top:420.6px;width:199.9px;height:10.9px;background:linear-gradient(#eef4fb,#d2e0f2);"></div>
<div class="a" style="left:787.4px;top:420.6px;width:61.35px;height:10.9px;background:linear-gradient(#fde7b8,#f4b45c);"></div>
<div class="a" style="left:848.75px;top:421px;width:1px;height:10px;background:#b4c6dc;"></div>
<div class="a" style="left:871px;top:421px;width:1px;height:10px;background:#b4c6dc;"></div>
<div class="a" style="left:914.4px;top:421px;width:1px;height:10px;background:#b4c6dc;"></div>
<div class="a" style="left:944.6px;top:421px;width:1px;height:10px;background:#b4c6dc;"></div>
<div class="t" style="left: 855.4px; top: 422.15px; font-size: 8.8px; color: rgb(26, 26, 26); transform-origin: left center; transform: scaleX(0.8365);">Ltr</div>
<div class="t" style="left: 873.75px; top: 422.15px; font-size: 8.8px; color: rgb(26, 26, 26); transform-origin: left center; transform: scaleX(0.8452);">N° Reserva</div>
<div class="t" style="left: 923.75px; top: 422.15px; font-size: 8.8px; color: rgb(26, 26, 26); transform-origin: left center; transform: scaleX(0.87);">Ver</div>
<div class="t" style="left: 953px; top: 422.15px; font-size: 8.8px; color: rgb(26, 26, 26); transform-origin: left center; transform: scaleX(0.9327);">Arc Adj</div>
<div class="a" style="left:987.3px;top:420.6px;width:10.7px;height:45.4px;background:#6e98c8;"></div>
<div class="a" style="left:987.3px;top:420.6px;width:10.7px;height:10px;background:linear-gradient(#e3edf9,#c8daf2);border:1px solid #9cb6da;"></div>
<svg style="left:989.2px;top:423.5px" width="7" height="4"><path d="M0 4 L3.5 0 L7 4Z" fill="#1a2a50"></path></svg>
<div class="a" style="left:987.3px;top:430.6px;width:10.7px;height:3px;background:linear-gradient(#e3edf9,#c8daf2);border:1px solid #9cb6da;"></div>
<div class="a" style="left:987.3px;top:456px;width:10.7px;height:10px;background:linear-gradient(#e3edf9,#c8daf2);border:1px solid #9cb6da;"></div>
<div class="a" style="left:786.4px;top:419.6px;width:211.9px;height:47.3px;border:1px solid #566a86;"></div>
<svg style="left:989.2px;top:459.5px" width="7" height="4"><path d="M0 0 L3.5 4 L7 0Z" fill="#1a2a50"></path></svg>
<div class="a" style="left:781.5px;top:472px;width:222.5px;height:95.5px;background:#f0f0f0;border:1px solid #4b4a86;box-shadow:inset 1px 1px 0 #fafafa;"></div>
<div class="a" style="left:782.5px;top:473px;width:220.5px;height:11px;background:linear-gradient(#c4c4c4,#d6d6d6 35%,#f0f0f0);"></div>
<div class="t" style="left: 783.8px; top: 474px; font-size: 8.5px; color: rgb(22, 22, 110); font-weight: bold; transform-origin: left center; transform: scaleX(0.8553);">Forma de Pago Asociada</div>
<div class="a" style="left:786.4px;top:488px;width:212.2px;height:74.2px;background:#fff;border:1px solid #566a86;overflow:hidden;"></div>
<div class="a" style="left:787.4px;top:489px;width:133.9px;height:10.5px;background:linear-gradient(#fde7b8,#f8cc80 55%,#f4b45c);"></div>
<div class="a" style="left:921.3px;top:489px;width:65.7px;height:10.5px;background:linear-gradient(#eef4fb,#d2e0f2);"></div>
<div class="a" style="left:787.4px;top:511.5px;width:199.6px;height:12px;background:#fefbc6;"></div>
<div class="a" style="left:787.4px;top:511px;width:199.6px;height:1px;background:#e6e2c4;"></div>
<div class="a" style="left:787.4px;top:523px;width:199.6px;height:1px;background:#e6e2c4;"></div>
<div class="a" style="left:787.4px;top:535.5px;width:199.6px;height:12px;background:#fefbc6;"></div>
<div class="a" style="left:787.4px;top:535px;width:199.6px;height:1px;background:#e6e2c4;"></div>
<div class="a" style="left:787.4px;top:547px;width:199.6px;height:1px;background:#e6e2c4;"></div>
<div class="a" style="left:787.4px;top:559.5px;width:199.6px;height:1.7px;background:#fefbc6;"></div>
<div class="a" style="left:787.4px;top:559px;width:199.6px;height:1px;background:#e6e2c4;"></div>
<div class="a" style="left:921px;top:499.5px;width:1px;height:61.7px;background:#d4d8de;"></div>
<div class="a" style="left:787.4px;top:499.5px;width:134.6px;height:12.5px;border:2px solid #111;background:#fff;"></div>
<div class="a" style="left:787.4px;top:490.85px;width:133.9px;text-align:center;line-height:1;white-space:nowrap;font-size:8.8px;color:#1a1a1a;"><span class="is" style="transform-origin: center center; transform: scaleX(0.8822);">Forma de Pago</span></div>
<div class="a" style="left:921.3px;top:490.85px;width:65.7px;text-align:center;line-height:1;white-space:nowrap;font-size:8.8px;color:#1a1a1a;"><span class="is" style="transform-origin: center center; transform: scaleX(0.9802);">Total Final</span></div>
<div class="t" style="left: 788.6px; top: 500.85px; font-size: 8.8px; color: rgb(26, 26, 26); transform-origin: left center; transform: scaleX(0.9539);">( Por definir )</div>
<div class="t" style="left: 788.6px; top: 512.85px; font-size: 8.8px; color: rgb(26, 26, 26); transform-origin: left center; transform: scaleX(0.7799);">AJUSTE POR ACTUALIZACION</div>
<div class="t" style="left: 788.6px; top: 524.85px; font-size: 8.8px; color: rgb(26, 26, 26); transform-origin: left center; transform: scaleX(0.8385);">AUTOMATICO</div>
<div class="t" style="left: 788.6px; top: 536.75px; font-size: 8.8px; color: rgb(26, 26, 26); transform-origin: left center; transform: scaleX(0.7594);">CALCE INTERNO</div>
<div class="t" style="left: 788.6px; top: 548.75px; font-size: 8.8px; color: rgb(26, 26, 26); transform-origin: left center; transform: scaleX(0.7832);">CHEQUE A FECHA</div>
<div class="a" style="left:987px;top:489px;width:11px;height:72.2px;background:#6e98c8;"></div>
<div class="a" style="left:987px;top:489px;width:11px;height:10.5px;background:linear-gradient(#e3edf9,#c8daf2);border:1px solid #9cb6da;"></div>
<svg style="left:989px;top:492px" width="7" height="4"><path d="M0 4 L3.5 0 L7 4Z" fill="#1a2a50"></path></svg>
<div class="a" style="left:987px;top:499.5px;width:11px;height:13.9px;background:linear-gradient(#e3edf9,#c8daf2);border:1px solid #9cb6da;"></div>
<div class="a" style="left:987px;top:551.3px;width:11px;height:9.9px;background:linear-gradient(#e3edf9,#c8daf2);border:1px solid #9cb6da;"></div>
<div class="a" style="left:786.4px;top:488px;width:212.2px;height:74.2px;border:1px solid #566a86;"></div>
<svg style="left:989px;top:554.5px" width="7" height="4"><path d="M0 0 L3.5 4 L7 0Z" fill="#1a2a50"></path></svg>
<div class="a" style="left:363px;top:572.5px;width:641px;height:21.7px;background:#f0f0f0;border:1px solid #4b4a86;box-shadow:inset 1px 1px 0 #fafafa;"></div>
<div class="a" style="left:364px;top:573.5px;width:639px;height:11px;background:linear-gradient(#c4c4c4,#d6d6d6 35%,#f0f0f0);"></div>
<div class="t" style="left: 365.3px; top: 573.8px; font-size: 8.5px; color: rgb(22, 22, 110); font-weight: bold; transform-origin: left center; transform: scaleX(0.8569);">Total Factura</div>
<div class="a" style="left:574.5px;top:578px;width:64.2px;height:13.8px;background:linear-gradient(#6890c6,#5a82b9);border:1px solid #1d2d58;"></div>
<div class="a" style="left:574.5px;top:581.65px;width:64.2px;text-align:center;line-height:1;white-space:nowrap;font-size:8.4px;color:#e9f0f9;text-shadow:0 0 0.6px rgba(255,255,255,0.5)"><span class="is" style="transform-origin: center center; transform: scaleX(0.9889);">Total Neto</span></div>
<div class="a" style="left:643px;top:578px;width:59.4px;height:13.8px;background:#dde8fb;border:1px solid #2e2e48;"></div>
<div class="a" style="right:665.6px;top:580.94px;text-align:right;line-height:1;white-space:nowrap;font-size:9px;color:#1b2572;"><span class="is" style="transform-origin: right center; transform: scaleX(0.9984);">$0</span></div>
<div class="a" style="left:707.4px;top:578px;width:58px;height:13.8px;background:linear-gradient(#6890c6,#5a82b9);border:1px solid #1d2d58;"></div>
<div class="a" style="left:707.4px;top:581.65px;width:58px;text-align:center;line-height:1;white-space:nowrap;font-size:8.4px;color:#e9f0f9;text-shadow:0 0 0.6px rgba(255,255,255,0.5)"><span class="is" style="transform-origin: center center; transform: scaleX(0.9076);">IVA</span></div>
<div class="a" style="left:765.4px;top:578px;width:21.1px;height:13.8px;background:#dde8fb;border:1px solid #2e2e48;border-left:none;border-right:none;"></div>
<div class="a" style="left:765.4px;top:580.94px;width:21.1px;text-align:center;line-height:1;white-space:nowrap;font-size:9px;color:#1b2572;"><span class="is">0</span></div>
<div class="a" style="left:786.5px;top:578px;width:16px;height:13.8px;background:linear-gradient(#6890c6,#5a82b9);border:1px solid #1d2d58;"></div>
<div class="a" style="left:786.5px;top:581.65px;width:16px;text-align:center;line-height:1;white-space:nowrap;font-size:8.4px;color:#e9f0f9;text-shadow:0 0 0.6px rgba(255,255,255,0.5)"><span class="is" style="transform-origin: center center; transform: scaleX(0.9392);">%</span></div>
<div class="a" style="left:807.5px;top:578px;width:59.3px;height:13.8px;background:#dde8fb;border:1px solid #2e2e48;"></div>
<div class="a" style="right:501.2px;top:580.94px;text-align:right;line-height:1;white-space:nowrap;font-size:9px;color:#1b2572;"><span class="is" style="transform-origin: right center; transform: scaleX(0.9984);">$0</span></div>
<div class="a" style="left:871.4px;top:578px;width:64px;height:13.8px;background:linear-gradient(#6890c6,#5a82b9);border:1px solid #1d2d58;"></div>
<div class="a" style="left:871.4px;top:581.65px;width:64px;text-align:center;line-height:1;white-space:nowrap;font-size:8.4px;color:#e9f0f9;text-shadow:0 0 0.6px rgba(255,255,255,0.5)"><span class="is" style="transform-origin: center center; transform: scaleX(1.0138);">Total Final</span></div>
<div class="a" style="left:940.3px;top:578px;width:58.3px;height:13.8px;background:#dde8fb;border:1px solid #2e2e48;"></div>
<div class="a" style="right:369.4px;top:580.94px;text-align:right;line-height:1;white-space:nowrap;font-size:9px;color:#1b2572;"><span class="is" style="transform-origin: right center; transform: scaleX(0.9485);">$0</span></div>


<!-- ============ STATUS BAR ============ -->
<div class="a" style="left:47px;top:697.5px;width:1271px;height:14px;background:#f0f0f0;border-top:1px solid #fafafa"></div>
<div class="a" style="left:47.5px;top:699.3px;width:44px;height:11.2px;background:#ececec;border-right:1px solid #c8c8c8"></div>
<svg style="left:48px;top:699.5px" width="11" height="12" viewBox="0 0 11 12"><circle cx="4" cy="3" r="2.5" fill="#d8862a"></circle><rect x="0.5" y="5.5" width="5" height="5" rx="2" fill="#2a50b0"></rect><rect x="4.5" y="5.5" width="6" height="6" fill="#fff" stroke="#2a3a80" stroke-width="0.8"></rect><path d="M5 8 L7 10.5 L11 5" stroke="#d02020" stroke-width="1.1" fill="none"></path></svg>
<div class="t" style="left: 61px; top: 700.8px; font-size: 8.6px; color: rgb(34, 34, 34); transform-origin: left center; transform: scaleX(0.8993);">109</div>
<div class="a" style="left:93.2px;top:699.3px;width:88.4px;height:11.2px;background:#ececec;border-top:1px solid #c4c4c4;border-left:1px solid #b4b4b4;border-right:1px solid #fff"></div>
<div class="t" style="left: 96.1px; top: 700.8px; font-size: 8.6px; color: rgb(34, 34, 34); transform-origin: left center; transform: scaleX(0.7904);">LARAYA</div>
<div class="a" style="left:182.2px;top:699.3px;width:11.7px;height:11.2px;background:#ececec;border-top:1px solid #c4c4c4;border-left:1px solid #b4b4b4"></div>
<svg style="left:183px;top:699.5px" width="11" height="12" viewBox="0 0 11 12"><rect x="0.5" y="0.5" width="8" height="10.5" fill="#e8eef8" stroke="#7a8aa8" stroke-width="0.8"></rect><path d="M2 3 H7 M2 5 H5" stroke="#8898b8" stroke-width="0.8"></path><rect x="3" y="5.5" width="5.5" height="5.5" fill="#fff" stroke="#2a3a80" stroke-width="0.8"></rect><path d="M3.5 8 L5.5 10.5 L10 5" stroke="#d02020" stroke-width="1.1" fill="none"></path></svg>
<div class="a" style="left:195px;top:699.3px;width:88px;height:11.2px;background:#ececec;border-top:1px solid #c4c4c4;border-left:1px solid #b4b4b4;border-right:1px solid #fff"></div>
<div class="t" style="left: 198px; top: 700.8px; font-size: 8.6px; color: rgb(34, 34, 34); transform-origin: left center; transform: scaleX(0.9156);">Versión: 03/04/2017</div>
<div class="a" style="left:284px;top:699.3px;width:177px;height:11.2px;background:#ececec;border-top:1px solid #c4c4c4;border-left:1px solid #b4b4b4;border-right:1px solid #fff"></div>
<div class="t" style="left: 287px; top: 700.8px; font-size: 8.6px; color: rgb(34, 34, 34); transform-origin: left center; transform: scaleX(0.7775);">RAC - SUC. LA SERENA</div>

<!-- ============ WIN10 TASKBAR ============ -->
<div class="a" style="left:47px;top:711.3px;width:1269px;height:26.5px;background:#050505"></div>
<div class="a" style="left:0;top:737.5px;width:1366px;height:30.5px;background:linear-gradient(90deg,#c08a3e 0%,#c68f38 20%,#c98f33 35%,#c5822e 47%,#c07a2a 49%)"></div>
<svg style="left:0;top:737.5px" width="1366" height="31" viewBox="0 0 1366 31"><polygon points="670,0 754,0 759,31 666,31" fill="#a3843f"></polygon><polygon points="754,0 1197,0 1245,31 759,31" fill="#c8b07a"></polygon><polygon points="1197,0 1366,0 1366,31 1245,31" fill="#d3a343"></polygon><polygon points="860,0 1197,0 1245,31 900,31" fill="#ccb47f" opacity="0.6"></polygon></svg>
<svg style="left:13px;top:745.5px" width="14" height="14"><path d="M0 2 L5.8 1.2 V6.6 H0 Z M6.7 1.1 L14 0 V6.6 H6.7 Z M0 7.4 H5.8 V12.8 L0 12 Z M6.7 7.4 H14 V14 L6.7 12.9 Z" fill="#fff"></path></svg>
<!-- win10 tb content -->
<svg style="left:57px;top:719px" width="11" height="11"><path d="M0 1.5 L4.8 0.8 V5.2 H0 Z M5.6 0.7 L11 0 V5.2 H5.6 Z M0 5.8 H4.8 V10.2 L0 9.5 Z M5.6 5.8 H11 V11 L5.6 10.3 Z" fill="#fff"></path></svg>
<svg style="left:89px;top:718px" width="12" height="12"><circle cx="7.5" cy="4.5" r="3.8" fill="none" stroke="#fff" stroke-width="1.2"></circle><path d="M4.8 7.2 L0.8 11.2" stroke="#fff" stroke-width="1.4"></path></svg>
<svg style="left:119px;top:718px" width="14" height="11"><rect x="2.5" y="0.5" width="9" height="10" fill="none" stroke="#fff" stroke-width="1"></rect><path d="M0.5 2.5 V8.5 M13.5 2.5 V8.5" stroke="#fff" stroke-width="1"></path></svg>
<svg style="left:153px;top:717px" width="14" height="14" viewBox="0 0 14 14"><path d="M12.8 8 H3.6 Q3.8 11.2 7.3 11.2 Q9.8 11.2 12.3 9.8 V12.6 Q10 13.8 7 13.8 Q0.8 13.8 0.8 7.3 Q0.8 0.4 7.5 0.4 Q13 0.4 12.8 6.2 Z M3.7 5.7 H9.8 Q9.8 3 7 3 Q4.3 3 3.7 5.7Z" fill="#1d7ad8"></path></svg>
<svg style="left:185px;top:717px" width="15" height="13"><path d="M0.5 1.5 H5.5 L7 3 H14.5 V12.5 H0.5Z" fill="#f2c84e"></path><rect x="0.5" y="4.5" width="14" height="8" fill="#fbe08a"></rect><rect x="4" y="9" width="7" height="3.5" fill="#3a8ad8"></rect></svg>
<svg style="left:218px;top:716px" width="14" height="15"><path d="M4 4 V2 Q4 0.5 7 0.5 Q10 0.5 10 2 V4" stroke="#fff" stroke-width="1" fill="none"></path><rect x="0.5" y="4" width="13" height="10.5" fill="#fff"></rect><path d="M3.5 7 H6.5 V10 H3.5Z M7.5 7 H10.5 V10 H7.5Z M3.5 10.8 H6.5 V13 H3.5Z M7.5 10.8 H10.5 V13 H7.5Z" fill="#000"></path></svg>
<svg style="left:249.5px;top:716.5px" width="15" height="15" viewBox="0 0 15 15"><circle cx="7.5" cy="7.5" r="7.2" fill="#db4437"></circle><path d="M7.5 7.5 L1.3 11.1 A7.2 7.2 0 0 1 1.2 3.9 Z" fill="#0f9d58"></path><path d="M7.5 7.5 L13.8 3.9 A7.2 7.2 0 0 1 7.5 14.7 Z" fill="#ffcd40"></path><path d="M7.5 7.5 L7.5 14.7 A7.2 7.2 0 0 1 1.3 11.1Z" fill="#0f9d58"></path><circle cx="7.5" cy="7.5" r="3.4" fill="#fff"></circle><circle cx="7.5" cy="7.5" r="2.6" fill="#4285f4"></circle></svg>
<svg style="left:280.5px;top:716.5px" width="16" height="15"><rect x="5" y="1" width="10.5" height="13" fill="#fff" stroke="#1d6b3a" stroke-width="0.8"></rect><path d="M7 4 H14 M7 7 H14 M7 10 H14 M10.5 2 V13" stroke="#1d6b3a" stroke-width="0.8"></path><rect x="0" y="2" width="9" height="11" fill="#1d7340"></rect><path d="M2 4.5 L7 10.5 M7 4.5 L2 10.5" stroke="#fff" stroke-width="1.4"></path></svg>
<div class="t" style="left: 299px; top: 720px; font-size: 9px; color: rgb(255, 255, 255); transform-origin: left center; transform: scaleX(0.8501);">Formato Base para ...</div>
<div class="a" style="left:277px;top:736px;width:100px;height:2px;background:#76b9ed"></div>
<svg style="left:387px;top:716px" width="16" height="16"><rect x="0" y="0" width="16" height="16" fill="#fff"></rect><path d="M3 7 L7 3 L11 7 V13 H3Z" fill="none" stroke="#b02a2a" stroke-width="1.3"></path><path d="M10 4 H13 M11.5 2.5 V5.5" stroke="#3aa060" stroke-width="1.4"></path><rect x="5" y="9" width="3" height="4" fill="#555"></rect></svg>
<div class="t" style="left: 406px; top: 720px; font-size: 9px; color: rgb(255, 255, 255); transform-origin: left center; transform: scaleX(0.8592);">Contabilidad y Pres...</div>
<div class="a" style="left:382.5px;top:736px;width:101px;height:2px;background:#76b9ed"></div>
<div class="a" style="left:487px;top:712px;width:106px;height:26px;background:#333"></div>
<div class="a" style="left:487px;top:736px;width:106px;height:2px;background:#9ccaf0"></div>
<svg style="left:494px;top:717px" width="15" height="15" viewBox="0 0 15 15"><path d="M3 1.5 L13 8 M12 1 L5 7.5 M6 3.5 L14 4" stroke="#2a60c8" stroke-width="1.8"></path><ellipse cx="6" cy="10.5" rx="5.5" ry="3.5" fill="#c03a22"></ellipse><ellipse cx="6" cy="10" rx="3" ry="1.6" fill="#f07050"></ellipse></svg>
<div class="t" style="left: 512.4px; top: 720px; font-size: 9px; color: rgb(255, 255, 255); transform-origin: left center; transform: scaleX(0.8516);">Software Contacar ...</div>
<div class="a" style="left:596.5px;top:736px;width:100.2px;height:1.5px;background:#76b9ed"></div>
<svg style="left:601.5px;top:716px" width="13" height="15"><path d="M0 1 L13 0 V15 L0 14Z" fill="#1a80e0"></path><circle cx="6.5" cy="7.5" r="4.8" fill="#fff"></circle><path d="M2.8 7.5 L5 5.6 V6.8 H8 V5.6 L10.2 7.5 L8 9.4 V8.2 H5 V9.4Z" fill="#1a80e0"></path></svg>
<div class="t" style="left: 619px; top: 720px; font-size: 9px; color: rgb(255, 255, 255); transform-origin: left center; transform: scaleX(0.8509);">TeamViewer</div>
<!-- tray -->
<svg style="left:1169px;top:722px" width="8" height="5"><path d="M0.5 4.5 L4 1 L7.5 4.5" stroke="#fff" stroke-width="1" fill="none"></path></svg>
<svg style="left:1184px;top:719px" width="11" height="12"><path d="M1 2 L3 0.5 L5 2 L3 3.5Z M6 2 L8 0.5 L10 2 L8 3.5Z M1 5 L3 3.5 L5 5 L3 6.5Z M6 5 L8 3.5 L10 5 L8 6.5Z M3.5 8 L5.5 6.5 L7.5 8 L5.5 9.5Z" fill="#fff"></path><circle cx="7.8" cy="9" r="3" fill="#3bb54a"></circle></svg>
<svg style="left:1199px;top:720px" width="12" height="11"><rect x="3" y="0.5" width="8.5" height="6.5" fill="none" stroke="#ddd" stroke-width="1"></rect><path d="M0.5 2 V10.5 H7 M7 7 V9" stroke="#ddd" stroke-width="1" fill="none"></path></svg>
<div class="t" style="left: 1218px; top: 720.5px; font-size: 8.4px; color: rgb(255, 255, 255); transform-origin: left center; transform: scaleX(0.7754);">ESP</div>
<div class="t" style="left: 1250.5px; top: 714.5px; font-size: 8.4px; color: rgb(255, 255, 255); transform-origin: left center; transform: scaleX(0.8346);">15:44</div>
<div class="t" style="left: 1240px; top: 726.5px; font-size: 8.4px; color: rgb(255, 255, 255); transform-origin: left center; transform: scaleX(0.9103);">05-04-2017</div>
<svg style="left:1290.5px;top:719px" width="12" height="11"><path d="M0.5 0.5 H11.5 V7.5 H6 L4 10 V7.5 H0.5Z" fill="none" stroke="#fff" stroke-width="1"></path></svg>
<div class="a" style="left:1315px;top:712px;width:1px;height:26px;background:#2a2a2a"></div>
<!-- win8 tb content -->
<svg style="left:55px;top:745px" width="16" height="15"><path d="M0.5 2 H6 L7.5 3.5 H15.5 V14.5 H0.5Z" fill="#f5d67a" stroke="#c9a040" stroke-width="0.6"></path><rect x="0.5" y="6" width="15" height="8.5" fill="#ffeaa8"></rect><path d="M3 13 V10 H13 V13" fill="none" stroke="#2a8ad0" stroke-width="1.6"></path></svg>
<svg style="left:101.5px;top:745px" width="15.5" height="15.5" viewBox="0 0 15 15"><circle cx="7.5" cy="7.5" r="7.2" fill="#db4437"></circle><path d="M7.5 7.5 L1.3 11.1 A7.2 7.2 0 0 1 1.2 3.9 Z" fill="#0f9d58"></path><path d="M7.5 7.5 L13.8 3.9 A7.2 7.2 0 0 1 7.5 14.7 Z" fill="#ffcd40"></path><path d="M7.5 7.5 L7.5 14.7 A7.2 7.2 0 0 1 1.3 11.1Z" fill="#0f9d58"></path><circle cx="7.5" cy="7.5" r="3.4" fill="#fff"></circle><circle cx="7.5" cy="7.5" r="2.6" fill="#4285f4"></circle></svg>
<div class="a" style="left:134px;top:739px;width:42px;height:29px;background:rgba(255,230,180,0.22);border:1px solid rgba(255,240,210,0.35)"></div>
<div class="a" style="left:180px;top:739px;width:42px;height:29px;background:rgba(255,230,180,0.22);border:1px solid rgba(255,240,210,0.35)"></div>
<div class="a" style="left:225.5px;top:739px;width:38px;height:29px;background:rgba(255,230,180,0.22);border:1px solid rgba(255,240,210,0.35)"></div>
<div class="a" style="left:264.5px;top:739px;width:4px;height:29px;background:rgba(255,230,180,0.22);border:1px solid rgba(255,240,210,0.35)"></div>
<div class="a" style="left:271.5px;top:739px;width:34.5px;height:29px;background:rgba(255,240,210,0.45);border:1px solid rgba(255,250,235,0.6)"></div>
<div class="a" style="left:307px;top:739px;width:3px;height:29px;background:rgba(255,240,210,0.45);border:1px solid rgba(255,250,235,0.6)"></div>
<div class="a" style="left:311px;top:739px;width:3px;height:29px;background:rgba(255,240,210,0.45);border:1px solid rgba(255,250,235,0.6)"></div>
<div class="a" style="left:148px;top:746px;width:15px;height:15px;background:#c2161b;border-radius:2px"></div>
<svg style="left:150px;top:748px" width="11" height="11"><path d="M1 10 Q4 6 5.5 1 Q7 6 10 10 Q5.5 7 1 10Z" fill="none" stroke="#fff" stroke-width="1.2"></path></svg>
<svg style="left:193px;top:745px" width="16" height="16"><circle cx="8" cy="8" r="7.5" fill="#1eaaf1"></circle><text x="8" y="12.5" font-size="12" font-weight="bold" text-anchor="middle" fill="#fff" font-family="Liberation Sans">S</text></svg>
<svg style="left:236px;top:745px" width="16" height="16"><path d="M8 0.5 L15 4 V12 L8 15.5 L1 12 V4Z" fill="#8aa6c8" stroke="#5a7090" stroke-width="0.8"></path><path d="M1 4 L8 7.5 L15 4 M8 7.5 V15.5" stroke="#cfdcec" stroke-width="1" fill="none"></path></svg>
<svg style="left:281px;top:745px" width="16" height="16"><rect x="0" y="0" width="16" height="16" rx="2" fill="#1a80e0"></rect><circle cx="8" cy="8" r="5.8" fill="#fff"></circle><path d="M3.5 8 L6 5.8 V7.2 H10 V5.8 L12.5 8 L10 10.2 V8.8 H6 V10.2Z" fill="#1a80e0"></path></svg>
<svg style="left:1162px;top:751px" width="9" height="5"><path d="M0 5 L4.5 0 L9 5Z" fill="#fff"></path></svg>
<svg style="left:1183px;top:746px" width="16" height="15"><path d="M1.5 0 V15" stroke="#fff" stroke-width="1.6"></path><path d="M2 1.5 H8 Q10 2.5 10 4 H15 Q13 6 15 8 H9 Q8 6.5 7.5 6.5 H2Z" fill="none" stroke="#fff" stroke-width="1.2"></path></svg>
<svg style="left:1207px;top:746px" width="16" height="15"><path d="M2 0 V4 M5 0 V4" stroke="#fff" stroke-width="1.2"></path><rect x="0.5" y="4" width="6" height="4" fill="#fff"></rect><path d="M3.5 8 V15" stroke="#fff" stroke-width="1.5"></path><rect x="8.5" y="1.5" width="7" height="13" rx="1" fill="none" stroke="#fff" stroke-width="1.2"></rect><rect x="10" y="3" width="4" height="10" fill="#fff" opacity="0.35"></rect></svg>
<svg style="left:1231px;top:748px" width="16" height="12"><path d="M0 12 V10 H2.5 V12Z M3.5 12 V8 H6 V12Z M7 12 V6 H9.5 V12Z M10.5 12 V3 H13 V12Z M14 12 V0 H16 V12Z" fill="#fff"></path></svg>
<svg style="left:1257px;top:746px" width="14" height="15"><path d="M0.5 5 H3.5 L8 1 V14 L3.5 10 H0.5Z" fill="none" stroke="#fff" stroke-width="1.2"></path><path d="M10.5 5 Q12 7.5 10.5 10" stroke="#fff" stroke-width="1" fill="none"></path></svg>
<div class="t" style="left: 1305.5px; top: 747px; font-size: 13px; color: rgb(255, 255, 255); transform-origin: left center; transform: scaleX(0.8142);">15:44</div>


<!-- ============ WIN8 TASKBAR ============ -->

<!--TB8-->

<!-- ============ MSGBOX ============ -->
<div class="a" style="left:524px;top:322px;width:320px;height:124px;background:#fff;border:1px solid #5b9bd5;box-shadow:0 0 6px rgba(0,0,0,0.18)"></div>
<div class="a" style="left:525px;top:413.5px;width:318px;height:31.5px;background:#f0f0f0"></div>
<div class="t" style="left: 527px; top: 326.5px; font-size: 8.8px; color: rgb(17, 17, 17); transform-origin: left center; transform: scaleX(0.8406);">Software Contacar ERP</div>
<svg style="left:830px;top:327px" width="8" height="8"><path d="M0.5 0.5 L7.5 7.5 M7.5 0.5 L0.5 7.5" stroke="#222" stroke-width="1"></path></svg>
<svg style="left:541px;top:358px" width="22" height="19" viewBox="0 0 22 19"><defs><linearGradient id="wg" x1="0" y1="0" x2="0" y2="1"><stop offset="0" stop-color="#fbe68a"></stop><stop offset="1" stop-color="#e3b21a"></stop></linearGradient></defs><path d="M11 1 L21 18 H1 Z" fill="url(#wg)" stroke="#b08a30" stroke-width="1" stroke-linejoin="round"></path><rect x="10" y="6" width="2" height="6.5" fill="#111"></rect><rect x="10" y="14" width="2" height="2" fill="#111"></rect></svg>
<div class="t" style="left: 568px; top: 357.5px; font-size: 8.8px; color: rgb(17, 17, 17); transform-origin: left center; transform: scaleX(0.8958);">No se puede grabar / modificar Documento de Venta por los siguientes</div>
<div class="t" style="left: 568px; top: 367.5px; font-size: 8.8px; color: rgb(17, 17, 17); transform-origin: left center; transform: scaleX(0.909);">motivos :</div>
<div class="t" style="left: 570.5px; top: 387px; font-size: 8.8px; color: rgb(17, 17, 17); transform-origin: left center; transform: scaleX(0.9032);">- No se pueden emitir Documento Electronico verifique dia de emisión</div>
<div class="a" style="left:773px;top:421px;width:58px;height:17.5px;background:#e1e1e1;border:1px solid #9a9a9a;box-shadow:inset 1px 1px 0 #f4f4f4"></div>
<div class="t" style="left: 788.5px; top: 426.5px; font-size: 8.8px; color: rgb(17, 17, 17); transform-origin: left center; transform: scaleX(0.8903);">Aceptar</div>

<!-- ============ TV PANEL ============ -->
<div class="a" style="left:1149.5px;top:572px;width:168.5px;height:139.5px;background:#5c5c5c;border:1px solid rgba(0,0,0,0.45);box-shadow:0 0 0 2px #6c6c6c inset"></div>
<div class="a" style="left:1152.5px;top:575px;width:162px;height:45px;background:#0a2956"></div>
<div class="a" style="left:1152.5px;top:620px;width:162px;height:21px;background:#0a3170;border-top:1px solid #0f3a72"></div>
<svg style="left:1133px;top:642px" width="18" height="35" viewBox="0 0 18 35"><path d="M17 0 H3 Q0.5 0 0.5 3 V24 L17 34 Z" fill="#5c5c5c" stroke="#444" stroke-width="0.8"></path><path d="M5 7 L9 10.5 L5 14" stroke="#222" stroke-width="1.5" fill="none"></path></svg>
<svg style="left:1158.5px;top:581.5px" width="23" height="27" viewBox="0 0 23 27"><path d="M1 1.5 L21 0.5 Q22.5 0.5 22.5 2 V25 Q22.5 26.5 21 26.5 L2.5 25.5 Q1 25.5 1 24 Z" fill="#0d3a78"></path><ellipse cx="11" cy="13.6" rx="8" ry="9.2" fill="#6f6a6c"></ellipse><path d="M3.8 13.2 L8 9.6 V11.8 H14 V9.6 L18.2 13.2 L14 16.8 V14.6 H8 V16.8 Z" fill="#0d3470"></path></svg>
<div class="t" style="left:1188.5px;top:580.6px;font-size:15px;color:#6d6d6d;letter-spacing:-0.2px"><b>Team</b>Viewer</div>
<div class="t" style="left: 1187.6px; top: 596.6px; font-size: 8.8px; color: rgb(106, 106, 106); transform-origin: left center; transform: scaleX(0.8703);">Licencia gratuita (solo uso no</div>
<div class="t" style="left: 1187.6px; top: 605.6px; font-size: 8.8px; color: rgb(106, 106, 106); transform-origin: left center; transform: scaleX(0.833);">comercial)</div>
<svg style="left:1297px;top:590px" width="8" height="8"><path d="M0.8 0.8 L7.2 7.2 M7.2 0.8 L0.8 7.2" stroke="#6e6e6e" stroke-width="1.8"></path></svg>
<svg style="left:1158px;top:627px" width="11" height="7"><rect x="0" y="0" width="8" height="7" fill="#6a6a6a"></rect><path d="M8 3.5 L11 1 V6 Z" fill="#6a6a6a"></path></svg>
<svg style="left:1181px;top:625px" width="11" height="11"><path d="M1.5 7 V5.5 A4 4 0 0 1 9.5 5.5 V7" stroke="#6a6a6a" stroke-width="1.4" fill="none"></path><rect x="0.5" y="6" width="2" height="3.5" fill="#6a6a6a"></rect><rect x="8.5" y="6" width="2" height="3.5" fill="#6a6a6a"></rect></svg>
<svg style="left:1203px;top:625px" width="11" height="11"><rect x="0" y="0" width="7.5" height="5" rx="1" fill="#6a6a6a"></rect><rect x="3" y="3" width="8" height="5.5" rx="1" fill="#6a6a6a" stroke="#032b62" stroke-width="0.6"></rect><path d="M8 8.5 L10 10.5 V8.5Z" fill="#6a6a6a"></path></svg>
<svg style="left:1227px;top:625px" width="10" height="11"><rect x="0" y="0" width="7" height="8" fill="none" stroke="#6a6a6a" stroke-width="1.2"></rect><rect x="3" y="3" width="7" height="8" fill="#6a6a6a"></rect></svg>
<svg style="left:1249.5px;top:627px" width="9" height="7"><path d="M0.5 0.5 L3.5 3.5 L0.5 6.5 M4.5 0.5 L7.5 3.5 L4.5 6.5" stroke="#6a6a6a" stroke-width="1.4" fill="none"></path></svg>
<div class="t" style="left: 1156px; top: 646.5px; font-size: 10.5px; color: rgb(46, 46, 46); transform-origin: left center; transform: scaleX(0.8307);">Lista de sesiones</div>
<svg style="left:1300px;top:647px" width="12" height="10" viewBox="0 0 12 10"><path d="M4.5 0 V9 M0 4.5 H9 M1.3 1.3 L7.7 7.7 M7.7 1.3 L1.3 7.7" stroke="#2a2a2a" stroke-width="1.6"></path><circle cx="4.5" cy="4.5" r="2.8" fill="#2a2a2a"></circle><circle cx="4.5" cy="4.5" r="1" fill="#5c5c5c"></circle><path d="M9.5 4.8 H11.5" stroke="#2a2a2a" stroke-width="1"></path></svg>
<div class="t" style="left: 1156px; top: 669.5px; font-size: 8.8px; color: rgb(46, 46, 46); transform-origin: left center; transform: scaleX(0.7858);">WIN8-EBQ-DEV3 (408 044 311)</div>
<svg style="left:1260px;top:671px" width="5" height="4"><path d="M0 0 H5 L2.5 4Z" fill="#3a3a3a"></path></svg>
<div class="a" style="left:1301px;top:668px;width:10.5px;height:10.5px;background:#1d5f98"></div>
<svg style="left:1304px;top:670px" width="6" height="7"><path d="M0 0 V6 L1.8 4.5 L3 7 L4 6.5 L2.8 4 H5Z" fill="#5c5c5c"></path></svg>
<div class="t" style="left: 1240px; top: 696.5px; font-size: 8.6px; color: rgb(46, 46, 46); text-decoration: underline; transform-origin: left center; transform: scaleX(0.8533);">www.teamviewer.com</div>


</body></html>
